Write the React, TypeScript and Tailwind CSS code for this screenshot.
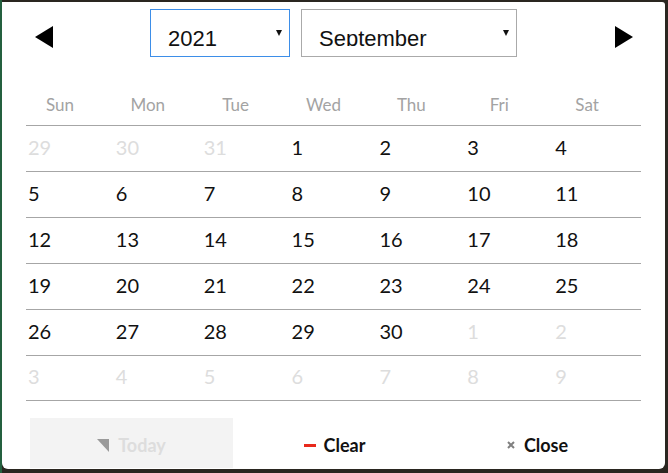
import React from "react"

const WEEKDAYS = ["Sun", "Mon", "Tue", "Wed", "Thu", "Fri", "Sat"]

type Day = { n: number; muted: boolean }

// September 2021 starts on a Wednesday
function buildMonth(): Day[][] {
  const days: Day[] = []
  ;[29, 30, 31].forEach((n) => days.push({ n, muted: true }))
  for (let n = 1; n <= 30; n++) days.push({ n, muted: false })
  let next = 1
  while (days.length < 42) days.push({ n: next++, muted: true })
  const weeks: Day[][] = []
  for (let i = 0; i < 42; i += 7) weeks.push(days.slice(i, i + 7))
  return weeks
}

const WEEKS = buildMonth()

const FakeSelect = ({ value, className }: { value: string; className: string }) => (
  <div className={`relative h-[48px] border bg-white ${className}`}>
    <div className="absolute left-[17px] top-[16px] h-[20px] overflow-hidden">
      <span className="block whitespace-nowrap font-['Liberation_Sans',sans-serif] text-[22px] leading-[26px] text-[#111]">
        {value}
      </span>
    </div>
    <svg className="absolute right-[7px] top-[20px]" width="6" height="6" viewBox="0 0 6 6">
      <polygon points="0,0 6,0 3,6" fill="#111" />
    </svg>
  </div>
)

const NavArrow = ({ dir }: { dir: "prev" | "next" }) => (
  <button type="button" className="mt-[17px] h-[22px] w-[18px]">
    <svg width="18" height="22" viewBox="0 0 18 22">
      {dir === "prev" ? (
        <polygon points="18,0 18,22 0,11" fill="#000" />
      ) : (
        <polygon points="0,0 0,22 18,11" fill="#000" />
      )}
    </svg>
  </button>
)

const Header = () => (
  <div className="flex items-start pt-[7px]">
    <div className="ml-[33px]">
      <NavArrow dir="prev" />
    </div>
    <div className="ml-[97px] flex gap-[11px]">
      <FakeSelect value="2021" className="w-[140px] border-[#3d8ee8]" />
      <FakeSelect value="September" className="w-[216px] border-[#aaaaaa]" />
    </div>
    <div className="ml-[98px]">
      <NavArrow dir="next" />
    </div>
  </div>
)

const CalendarGrid = () => (
  <div className="mx-[24px] mt-[28px] font-['Lato',sans-serif]">
    <div className="grid h-[40px] grid-cols-7 items-center">
      {WEEKDAYS.map((d) => (
        <div key={d} className="pr-[20px] text-center text-[17px] text-[#a3a3a3]">
          {d}
        </div>
      ))}
    </div>
    {WEEKS.map((week, i) => (
      <div
        key={i}
        className={`grid h-[46px] grid-cols-7 items-center border-t border-[#a6a6a6] pb-[4px] ${
          i === WEEKS.length - 1 ? "border-b" : ""
        }`}
      >
        {week.map((day, j) => (
          <div
            key={j}
            className={`pl-[2px] text-[20px] leading-none ${day.muted ? "text-[#dddddd]" : "text-[#111]"}`}
          >
            {day.n}
          </div>
        ))}
      </div>
    ))}
  </div>
)

const Footer = () => (
  <div className="ml-[28px] mt-[17px] flex h-[50px] font-['Lato',sans-serif] text-[18px] font-bold">
    <button type="button" className="flex w-[203px] items-center justify-center gap-[9px] bg-[#f3f3f3] pt-[4px] text-[#dddddd]">
      <svg width="12" height="13" viewBox="0 0 12 13">
        <polygon points="0,0 12,0 12,13" fill="#9a9a9a" />
      </svg>
      Today
    </button>
    <button type="button" className="flex w-[203px] items-center justify-center gap-[8px] pt-[4px] text-[#111]">
      <span className="h-[3px] w-[12px] bg-[#e8291c]" />
      Clear
    </button>
    <button type="button" className="flex w-[203px] items-center justify-center gap-[9px] pt-[4px] text-[#111]">
      <svg width="8" height="8" viewBox="0 0 8 8">
        <path d="M1 1 L7 7 M7 1 L1 7" stroke="#808080" strokeWidth="2" />
      </svg>
      Close
    </button>
  </div>
)

export default function App() {
  return (
    <div className="h-[473px] w-[668px] overflow-hidden border-l-2 border-l-[#24603f] bg-[#2a2620] pb-[4px] pr-[3px] pt-[2px]">
      <div className="h-[467px] overflow-hidden rounded-b-[6px] rounded-tr-[3px] bg-white">
        <Header />
        <CalendarGrid />
        <Footer />
      </div>
    </div>
  )
}
